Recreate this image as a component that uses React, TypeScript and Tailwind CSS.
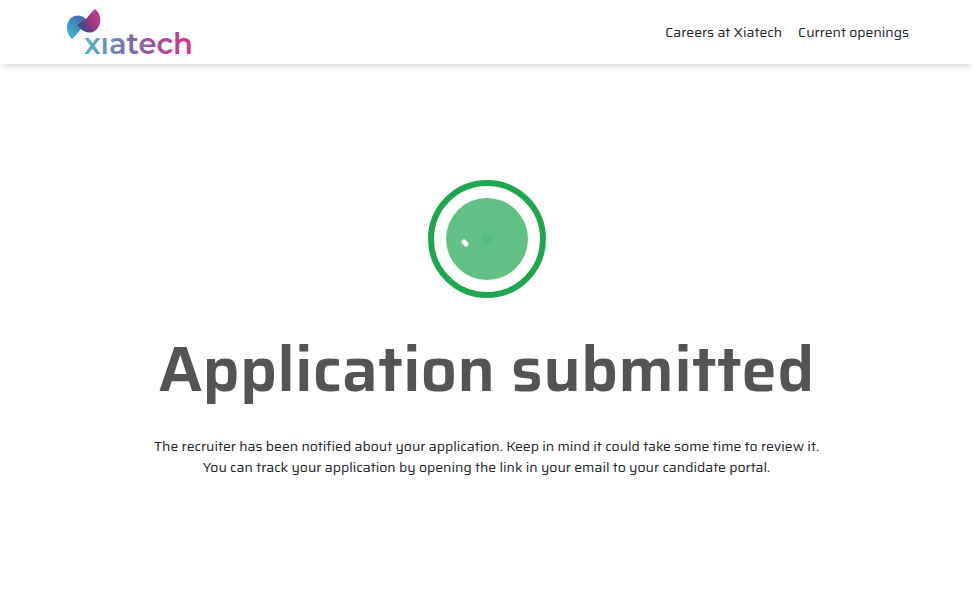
function Logo() {
  return (
    <svg width="132" height="60" viewBox="-2 -6 132 60" role="img" aria-label="Xiatech">
      <defs>
        <linearGradient id="word" gradientUnits="userSpaceOnUse" x1="18" y1="0" x2="125" y2="0">
          <stop offset="0" stopColor="#55b4cb" />
          <stop offset="0.45" stopColor="#7d68a8" />
          <stop offset="1" stopColor="#d8328a" />
        </linearGradient>
        <linearGradient id="blue" gradientUnits="userSpaceOnUse" x1="3" y1="26" x2="20" y2="9">
          <stop offset="0" stopColor="#3bb3d3" />
          <stop offset="0.55" stopColor="#3f86b4" />
          <stop offset="1" stopColor="#5a5ba6" />
        </linearGradient>
        <linearGradient id="pink" gradientUnits="userSpaceOnUse" x1="33" y1="6" x2="11" y2="19">
          <stop offset="0" stopColor="#cb3a90" />
          <stop offset="0.5" stopColor="#8d3a86" />
          <stop offset="0.75" stopColor="#51438c" />
          <stop offset="1" stopColor="#2b5583" />
        </linearGradient>
      </defs>
      <path d="M6 31C0 26 -1 15 5 10C10 6 16 7 20 11L24 15L15 21C12 24 10 28 6 31Z" fill="url(#blue)" />
      <path d="M29 1C36 6 36 17 30 22C25 26 19 25 15 21L11 17L20 11C23 8 25 4 29 1Z" fill="url(#pink)" />
      <text x="18" y="46" fontSize="29" className="font-['Montserrat','Inter',sans-serif] font-semibold" fill="url(#word)">
        xıatech
      </text>
    </svg>
  );
}

function SubmittedIcon() {
  return (
    <svg width="120" height="120" viewBox="0 0 120 120" aria-hidden="true">
      <circle cx="60" cy="60" r="56" fill="none" stroke="#1fa750" strokeWidth="6" />
      <circle cx="60" cy="60" r="41" fill="#61c185" />
      <circle cx="60" cy="60" r="5" fill="#53bb7b" />
      <path d="M37 63l2 2" stroke="#fff" strokeWidth="5" strokeLinecap="round" />
    </svg>
  );
}

export default function App() {
  return (
    <div className="min-h-screen bg-white font-['Saira','Roboto',sans-serif] text-sm text-[#212529]">
      <header className="flex h-16 items-center justify-between px-16 shadow-[0_4px_6px_-2px_rgba(0,0,0,0.17)]">
        <a href="#">
          <Logo />
        </a>
        <nav className="flex gap-4">
          <a href="#">Careers at Xiatech</a>
          <a href="#">Current openings</a>
        </nav>
      </header>

      <main className="flex flex-col items-center px-4 pt-[115px] text-center">
        <SubmittedIcon />
        <h1 className="mt-[30px] text-[64px] leading-[80px] font-semibold text-[#545454]">Application submitted</h1>
        <p className="mt-[27px] leading-[21px]">
          The recruiter has been notified about your application. Keep in mind it could take some time to review it.
          <br />
          You can track your application by opening the link in your email to your candidate portal.
        </p>
      </main>
    </div>
  );
}
